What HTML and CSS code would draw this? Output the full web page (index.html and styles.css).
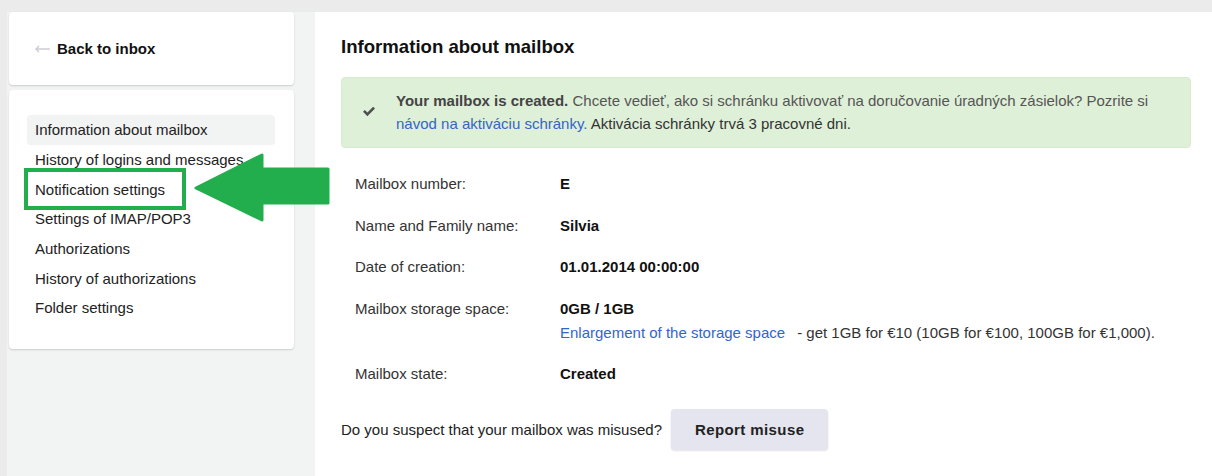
FILE: index.html
```html
<!DOCTYPE html>
<html lang="en">
<head>
<meta charset="utf-8">
<title>Information about mailbox</title>
<link rel="stylesheet" href="styles.css">
</head>
<body>
<div class="layout">
  <aside class="sidebar">
    <div class="card back-card">
      <a class="back-link" href="#">
        <svg class="back-icon" width="16" height="8" viewBox="0 0 16 8" aria-hidden="true">
          <path d="M1 4H15" stroke="#c9cad3" stroke-width="1.4" fill="none"/>
          <path d="M4 1L1 4L4 7" stroke="#c9cad3" stroke-width="1.4" fill="none"/>
        </svg>
        <span>Back to inbox</span>
      </a>
    </div>
    <nav class="card nav-card">
      <a class="nav-item active" href="#">Information about mailbox</a>
      <a class="nav-item" href="#">History of logins and messages</a>
      <a class="nav-item" href="#">Notification settings</a>
      <a class="nav-item" href="#">Settings of IMAP/POP3</a>
      <a class="nav-item" href="#">Authorizations</a>
      <a class="nav-item" href="#">History of authorizations</a>
      <a class="nav-item" href="#">Folder settings</a>
    </nav>
    <div class="highlight-box"></div>
    <svg class="pointer-arrow" width="140" height="74" viewBox="0 0 140 74" aria-hidden="true">
      <polygon points="3,38 69,5 69,19 135,19 135,53 69,53 69,70" fill="#23ae4e" stroke="#23ae4e" stroke-width="3" stroke-linejoin="round"/>
    </svg>
  </aside>

  <main class="content">
    <h1 class="title">Information about mailbox</h1>

    <div class="alert">
      <svg class="alert-icon" width="14" height="11" viewBox="0 0 14 11" aria-hidden="true">
        <path d="M1 5.8L2.9 3.9L5.4 6.4L11.1 0.7L13 2.6L5.4 10.2Z" fill="#505050"/>
      </svg>
      <p class="alert-text">
        <strong>Your mailbox is created.</strong>
        <span class="muted">Chcete vedieť, ako si schránku aktivovať na doručovanie úradných zásielok? Pozrite si</span>
        <a href="#">návod na aktiváciu schránky.</a> Aktivácia schránky trvá 3 pracovné dni.
      </p>
    </div>

    <dl class="info">
      <div class="info-row">
        <dt>Mailbox number:</dt>
        <dd><b>E</b></dd>
      </div>
      <div class="info-row">
        <dt>Name and Family name:</dt>
        <dd><b>Silvia</b></dd>
      </div>
      <div class="info-row">
        <dt>Date of creation:</dt>
        <dd><b>01.01.2014 00:00:00</b></dd>
      </div>
      <div class="info-row">
        <dt>Mailbox storage space:</dt>
        <dd>
          <b>0GB / 1GB</b>
          <span class="storage-extra"><a href="#">Enlargement of the storage space</a><span class="price">- get 1GB for €10 (10GB for €100, 100GB for €1,000).</span></span>
        </dd>
      </div>
      <div class="info-row">
        <dt>Mailbox state:</dt>
        <dd><b>Created</b></dd>
      </div>
    </dl>

    <div class="misuse">
      <span>Do you suspect that your mailbox was misused?</span>
      <button class="btn" type="button">Report misuse</button>
    </div>
  </main>
</div>
</body>
</html>
```

FILE: styles.css
```css
* {
  box-sizing: border-box;
}

html,
body {
  margin: 0;
  height: 100%;
}

body {
  background: #ebebeb;
  font-family: "Liberation Sans", Arial, sans-serif;
  font-size: 15px;
  color: #333;
  padding-top: 12px;
  overflow: hidden;
}

a {
  text-decoration: none;
}

.layout {
  display: flex;
  height: 100%;
  padding-left: 7px;
}

/* Left column */
.sidebar {
  position: relative;
  width: 308px;
  flex: none;
  background: #f2f4f3;
  padding: 0 21px 0 2px;
}

.card {
  background: #fff;
  border-radius: 4px;
  box-shadow: 0 1px 2px rgba(0, 0, 0, 0.16);
}

.back-card {
  height: 73px;
  display: flex;
  align-items: center;
  padding-left: 26px;
}

.back-link {
  display: flex;
  align-items: center;
  gap: 6px;
  color: #111;
  font-weight: bold;
  font-size: 15px;
}

.nav-card {
  margin-top: 5px;
  padding: 25px 19px 26px 18px;
  display: flex;
  flex-direction: column;
}

.nav-item {
  height: 29.7px;
  display: flex;
  align-items: center;
  padding-left: 8px;
  color: #222;
  border-radius: 4px;
  white-space: nowrap;
}

.nav-item.active {
  background: #f2f3f3;
}

.highlight-box {
  position: absolute;
  left: 17px;
  top: 156px;
  width: 162px;
  height: 42px;
  border: 4px solid #23ae4e;
}

.pointer-arrow {
  position: absolute;
  left: 186px;
  top: 138px;
  z-index: 2;
}

/* Main panel */
.content {
  flex: 1;
  background: #fff;
  box-shadow: -1px 0 0 #e4e4e4;
  padding: 24px 21px 0 26px;
}

.title {
  margin: 0;
  font-size: 18.6px;
  line-height: 22px;
  color: #111;
}

.alert {
  margin-top: 19px;
  background: #dff0d8;
  border: 1px solid #d6ebcb;
  border-radius: 4px;
  padding: 11px 20px 12px 20px;
  display: flex;
  align-items: center;
  gap: 20px;
}

.alert-icon {
  flex: none;
  margin-top: -2px;
}

.alert-text {
  margin: 0;
  line-height: 23px;
  color: #333;
}

.alert-text strong {
  color: #444;
}

.alert-text .muted {
  color: #555;
}

.alert-text a,
.storage-extra a {
  color: #3465c9;
}

.info {
  margin: 26px 0 0;
  padding-left: 14px;
  display: flex;
  flex-direction: column;
  gap: 21.5px;
}

.info-row {
  display: flex;
  line-height: 20px;
}

.info-row dt {
  width: 205px;
  flex: none;
  color: #333;
}

.info-row dd {
  margin: 0;
  color: #111;
}

.storage-extra {
  display: block;
  margin-top: 4px;
}

.price {
  margin-left: 12px;
  color: #333;
}

.misuse {
  margin-top: 25px;
  display: flex;
  align-items: center;
  gap: 9px;
  color: #222;
}

.btn {
  height: 41px;
  padding: 0 24px;
  background: #e4e5ee;
  border: none;
  border-radius: 4px;
  box-shadow: 0 1px 2px rgba(0, 0, 0, 0.12);
  font-family: "Liberation Sans", Arial, sans-serif;
  font-size: 15px;
  font-weight: bold;
  letter-spacing: 0.4px;
  color: #222;
}
```
